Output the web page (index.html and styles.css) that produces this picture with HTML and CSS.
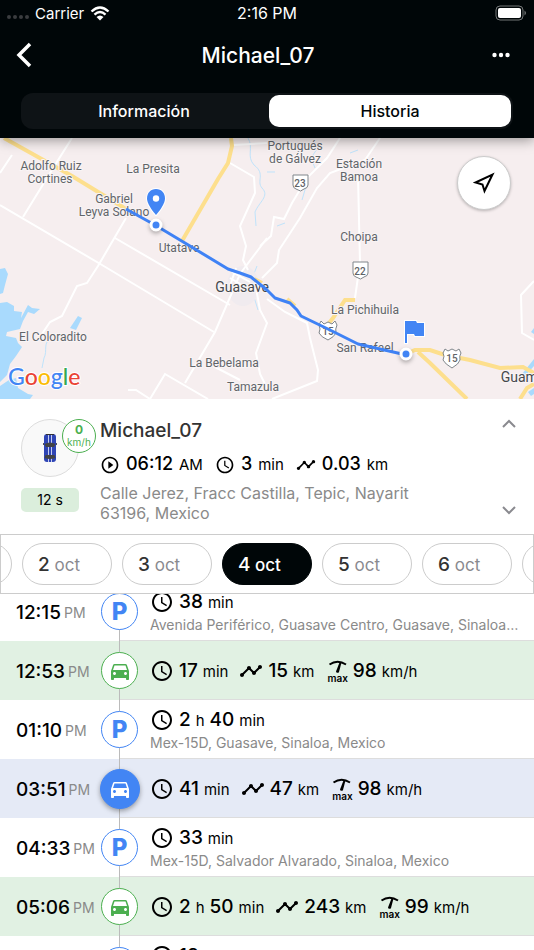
FILE: index.html
```html
<!DOCTYPE html>
<html lang="es">
<head>
    <meta charset="UTF-8">
    <meta name="viewport" content="width=device-width, initial-scale=1.0">
    <title>Michael_07 - Historia</title>
    <link rel="stylesheet" href="styles.css">
</head>
<body>
    <!-- shared icons -->
    <svg class="sprite" aria-hidden="true">
        <symbol id="i-clock" viewBox="0 0 24 24">
            <path d="M11.99 2C6.47 2 2 6.48 2 12s4.47 10 9.99 10C17.52 22 22 17.52 22 12S17.52 2 11.99 2zM12 20c-4.42 0-8-3.58-8-8s3.58-8 8-8 8 3.58 8 8-3.58 8-8 8zm.5-13H11v6l5.25 3.15.75-1.23-4.5-2.67z"/>
        </symbol>
        <symbol id="i-play" viewBox="0 0 24 24">
            <path d="M10 16.500l6-4.500-6-4.500v9zM12 2C6.480 2 2 6.480 2 12s4.480 10 10 10 10-4.480 10-10S17.520 2 12 2zm0 18c-4.410 0-8-3.590-8-8s3.590-8 8-8 8 3.590 8 8-3.590 8-8 8z"/>
        </symbol>
        <symbol id="i-route" viewBox="0 0 24 24">
            <path d="M23 8c0 1.100-.9 2-2 2-.18 0-.35-.02-.51-.07l-3.560 3.550c.05.16.07.34.07.52 0 1.100-.9 2-2 2s-2-.9-2-2c0-.18.02-.36.07-.52l-2.550-2.550c-.16.05-.34.07-.52.07s-.36-.02-.52-.07l-4.550 4.560c.05.16.07.33.07.51 0 1.100-.9 2-2 2s-2-.9-2-2 .9-2 2-2c.18 0 .35.02.51.07l4.560-4.550C8.020 9.360 8 9.180 8 9c0-1.100.9-2 2-2s2 .9 2 2c0 .18-.02.36-.07.52l2.550 2.550c.16-.05.34-.07.52-.07s.36.02.52.07l3.550-3.560C19.020 8.350 19 8.180 19 8c0-1.100.9-2 2-2s2 .9 2 2z"/>
        </symbol>
        <symbol id="i-car" viewBox="0 0 24 24">
            <path d="M18.920 6.010C18.720 5.420 18.160 5 17.500 5h-11c-.66 0-1.210.42-1.420 1.010L3 12v8c0 .55.45 1 1 1h1c.55 0 1-.45 1-1v-1h12v1c0 .55.45 1 1 1h1c.55 0 1-.45 1-1v-8l-2.080-5.990zM6.500 16c-.83 0-1.500-.67-1.500-1.500S5.670 13 6.500 13s1.500.67 1.500 1.500S7.330 16 6.500 16zm11 0c-.83 0-1.500-.67-1.500-1.500s.67-1.500 1.500-1.500 1.500.67 1.500 1.500-.67 1.500-1.500 1.500zM5 11l1.500-4.500h11L19 11H5z"/>
        </symbol>
        <symbol id="i-gauge" viewBox="0 0 20 14">
            <path d="M1.500 4.500Q9.500 -1 18 4.500" fill="none" stroke="currentColor" stroke-width="2"/>
            <path d="M11.500 2.500L13.500 2.500L11 12A1.600 1.600 0 0 1 8 11.500Z"/>
        </symbol>
    </svg>

    <header class="header">
        <div class="status">
            <div class="status-left">
                <span class="signal"><i></i><i></i><i></i><i></i></span>
                <span>Carrier</span>
                <svg class="wifi" viewBox="0 0 20 15">
                    <path d="M1.500 5.500Q10 -2.500 18.500 5.500M4.500 8.700Q10 3.500 15.500 8.700" fill="none" stroke="#fff" stroke-width="2.400"/>
                    <path d="M6.500 11Q10 8 13.500 11L10 14.500Z" fill="#fff"/>
                </svg>
            </div>
            <span class="clock">2:16 PM</span>
            <div class="status-right">
                <svg class="battery" viewBox="0 0 32 16">
                    <rect x="1" y="1" width="27" height="14" rx="4" fill="none" stroke="#737677"/>
                    <rect x="3" y="3" width="23" height="10" rx="2" fill="#fff"/>
                    <path d="M29.500 5.500Q32.500 8 29.500 10.500Z" fill="#737677"/>
                </svg>
            </div>
        </div>
        <div class="navbar">
            <button class="nav-btn" aria-label="Volver">
                <svg width="18" height="28" viewBox="0 0 18 28"><path d="M14 3L3 14L14 25" fill="none" stroke="#fff" stroke-width="3.500"/></svg>
            </button>
            <h1>Michael_07</h1>
            <button class="nav-btn nav-more" aria-label="Más">
                <svg width="18" height="6" viewBox="0 0 18 6" fill="#fff"><circle cx="2.500" cy="3" r="2.200"/><circle cx="9" cy="3" r="2.200"/><circle cx="15.500" cy="3" r="2.200"/></svg>
            </button>
        </div>
        <div class="tabs">
            <button class="tab">Información</button>
            <button class="tab active">Historia</button>
        </div>
    </header>

    <section class="map">
        <svg class="map-canvas" viewBox="0 0 534 261" preserveAspectRatio="xMidYMid slice">
            <!-- water -->
            <g fill="#a9dafd">
                <path d="M0 131L5 130L8 136L5 147L3 155L0 156Z"/>
                <path d="M0 165L7 164L14 168L14 173L22 174L21 180L28 167L32 170L40 171L34 176L28 174L23 183L20 191L7 194L6 198L16 200L18 205L22 209L16 218L10 226L7 237L0 244Z"/>
                <path d="M0 248L9 242L16 240L18 250L28 256L33 257L30 261L0 261Z"/>
                <path d="M70 190L78 178L82 180L76 192Z"/>
                <path d="M534 221L526 231L522 236L526 237L534 228ZM534 250L528 254L531 258L534 256ZM534 190L531 194L534 196Z"/>
            </g>
            <g class="river">
                <path d="M248 0C254 10 246 18 254 27C266 36 256 43 262 50C270 58 259 64 255 74L256 88"/>
                <path d="M319 8L311 20L315 30M307 45L302 62M285 85L277 88M257 128L250 146L258 172M52 200C42 204 48 213 44 220L42 230M267 34L275 34M358 12L350 15"/>
            </g>
            <ellipse cx="243" cy="148" rx="16" ry="20" fill="#f0ebef"/>
            <!-- minor roads -->
            <g class="road">
                <path d="M0 67L102 127L214 194M115 100L230 167M126 80L98 128L87 145L77 148L62 178L50 184L38 202"/>
                <path d="M72 0L55 27L23 79M12 17L0 35M267 100L240 136L215 194L185 245M128 252L136 252L150 261L165 236L208 261"/>
                <path d="M230 25L254 39L255 55L240 88L246 108L243 122L248 132M256 150L260 172L267 185L256 215L260 236L267 250M233 7L267 5M213 228L240 242"/>
                <path d="M340 0L327 20L307 40L292 65L284 81L274 79L271 98L260 108M380 0L365 22L330 35L317 50L300 80L279 112L277 125L262 140"/>
                <path d="M358 38L360 125L355 160M267 161L285 174L307 185L310 200L318 232L317 243L272 261M534 143L521 157L522 195L534 202"/>
                <path d="M232 134L250 144M230 140L247 150M236 130L230 148"/>
            </g>
            <!-- highways -->
            <g class="highway">
                <path d="M4 0L72 38L126 71M231 0L232 8L228 25L218 41L182 103M355 162L345 162L333 180L325 190M254 141L262 145M287 161L295 168"/>
                <path d="M406 216L415 212L430 212L445 217L470 222L500 230L523 229L534 235M418 214L430 225L467 261M534 246L527 250L520 261"/>
            </g>
            <!-- road shields -->
            <g class="shield">
                <path d="M293 37H308V47Q308 50 304 51L300.500 53L296 51Q293 50 293 47Z"/>
                <path d="M353 124H368V135Q368 138 364 139L360.500 141L356 139Q353 138 353 135Z"/>
                <path d="M321 183L324 186L328 184L332 186L335 183L337 187Q335 191 336 195Q334 199 328 202Q321 199 319 195Q321 191 319 187Z"/>
                <path d="M445 211L448 213L452 211L456 213L459 211L461 215Q459 218 460 222Q459 226 452 230Q445 226 443 222Q445 218 443 215Z"/>
            </g>
            <g class="shield-text">
                <text x="300" y="49">23</text>
                <text x="360" y="137">22</text>
                <text x="328" y="197">15</text>
                <text x="452" y="224">15</text>
            </g>
            <g class="place">
                <text x="51" y="32">Adolfo Ruiz</text>
                <text x="50" y="45">Cortines</text>
                <text x="153" y="35">La Presita</text>
                <text x="114" y="65">Gabriel</text>
                <text x="114" y="78">Leyva Solano</text>
                <text x="179" y="114">Utatave</text>
                <text x="295" y="12">Portugués</text>
                <text x="295" y="25">de Gálvez</text>
                <text x="359" y="30">Estación</text>
                <text x="359" y="43">Bamoa</text>
                <text x="359" y="103">Choipa</text>
                <text x="365" y="176">La Pichihuila</text>
                <text x="365" y="214">San Rafael</text>
                <text x="53" y="203">El Coloradito</text>
                <text x="224" y="229">La Bebelama</text>
                <text x="253" y="253">Tamazula</text>
                <text class="city" x="242" y="154">Guasave</text>
                <text class="city" x="534" y="244">Guamúchil</text>
            </g>
            <!-- trip -->
            <path class="trip" d="M126 71L155 87L185 105L228 131L240 135L251 139L267 152L275 160L290 165L297 172L301 178L330 192L358 206L380 211L402 216"/>
            <g class="stop">
                <circle cx="156" cy="87" r="5"/>
                <circle cx="406" cy="216" r="5"/>
            </g>
            <path class="pin" d="M156 51C150.500 51 147 55 147 60.500C147 67 156 77 156 77S165 67 165 60.500C165 55 161.500 51 156 51Z"/>
            <circle cx="156" cy="60.500" r="3.200" fill="#fff"/>
            <path class="pin" d="M405 183H416L417 185H424V198H415L414 196H407V205H405Z"/>
            <text class="google" x="8" y="247"><tspan fill="#4285f4">G</tspan><tspan fill="#ea4335">o</tspan><tspan fill="#fbbc05">o</tspan><tspan fill="#4285f4">g</tspan><tspan fill="#34a853">l</tspan><tspan fill="#ea4335">e</tspan></text>
        </svg>
        <button class="locate" aria-label="Centrar">
            <svg width="22" height="22" viewBox="0 0 22 22"><path d="M19.500 2.500L11.500 19L9.500 12.500L2.500 10.500Z" fill="none" stroke="#000" stroke-width="2"/></svg>
        </button>
    </section>

    <section class="summary">
        <div class="avatar-col">
            <div class="avatar">
                <svg width="16" height="30" viewBox="0 0 16 30">
                    <rect x="1" y="10" width="14" height="2" fill="#555"/>
                    <rect x="2" y="1" width="12" height="28" rx="3" fill="#2f45b5"/>
                    <path d="M4 1.500H12" stroke="#333"/>
                    <path d="M6.500 2V29M9.500 2V29" stroke="#c5cdf0"/>
                    <path d="M2.500 11Q8 8 13.500 11L12 14H4ZM3.500 22H12.500L13.500 25Q8 27 2.500 25Z" fill="#444"/>
                </svg>
                <div class="speed"><b>0</b><span>km/h</span></div>
            </div>
            <div class="ago">12 s</div>
        </div>
        <div class="summary-body">
            <h2>Michael_07</h2>
            <div class="stats small">
                <svg class="icon"><use href="#i-play"/></svg><b>06:12</b><span>AM</span>
                <svg class="icon"><use href="#i-clock"/></svg><b>3</b><span>min</span>
                <svg class="icon"><use href="#i-route"/></svg><b>0.03</b><span>km</span>
            </div>
            <p>Calle Jerez, Fracc Castilla, Tepic, Nayarit 63196, Mexico</p>
        </div>
        <div class="arrows">
            <button aria-label="Anterior"><svg width="14" height="9" viewBox="0 0 14 9"><path d="M1 8L7 2L13 8"/></svg></button>
            <button aria-label="Siguiente"><svg width="14" height="9" viewBox="0 0 14 9"><path d="M1 1L7 7L13 1"/></svg></button>
        </div>
    </section>

    <nav class="dates">
        <button class="date"></button>
        <button class="date"><b>2</b> oct</button>
        <button class="date"><b>3</b> oct</button>
        <button class="date active"><b>4</b> oct</button>
        <button class="date"><b>5</b> oct</button>
        <button class="date"><b>6</b> oct</button>
        <button class="date"></button>
    </nav>

    <main class="timeline">
        <div class="row">
            <div class="time"><b>12:15</b><span>PM</span></div>
            <div class="node"><span class="dot park">P</span></div>
            <div class="detail">
                <div class="stats"><svg class="icon"><use href="#i-clock"/></svg><b>38</b><span>min</span></div>
                <p>Avenida Periférico, Guasave Centro, Guasave, Sinaloa, Mexico</p>
            </div>
        </div>
        <div class="row drive">
            <div class="time"><b>12:53</b><span>PM</span></div>
            <div class="node"><span class="dot car"><svg><use href="#i-car"/></svg></span></div>
            <div class="detail">
                <div class="stats">
                    <svg class="icon"><use href="#i-clock"/></svg><b>17</b><span>min</span>
                    <svg class="icon"><use href="#i-route"/></svg><b>15</b><span>km</span>
                    <span class="max"><svg><use href="#i-gauge"/></svg>max</span><b>98</b><span>km/h</span>
                </div>
            </div>
        </div>
        <div class="row">
            <div class="time"><b>01:10</b><span>PM</span></div>
            <div class="node"><span class="dot park">P</span></div>
            <div class="detail">
                <div class="stats"><svg class="icon"><use href="#i-clock"/></svg><b>2</b><span>h</span><b>40</b><span>min</span></div>
                <p>Mex-15D, Guasave, Sinaloa, Mexico</p>
            </div>
        </div>
        <div class="row selected">
            <div class="time"><b>03:51</b><span>PM</span></div>
            <div class="node"><span class="dot car"><svg><use href="#i-car"/></svg></span></div>
            <div class="detail">
                <div class="stats">
                    <svg class="icon"><use href="#i-clock"/></svg><b>41</b><span>min</span>
                    <svg class="icon"><use href="#i-route"/></svg><b>47</b><span>km</span>
                    <span class="max"><svg><use href="#i-gauge"/></svg>max</span><b>98</b><span>km/h</span>
                </div>
            </div>
        </div>
        <div class="row">
            <div class="time"><b>04:33</b><span>PM</span></div>
            <div class="node"><span class="dot park">P</span></div>
            <div class="detail">
                <div class="stats"><svg class="icon"><use href="#i-clock"/></svg><b>33</b><span>min</span></div>
                <p>Mex-15D, Salvador Alvarado, Sinaloa, Mexico</p>
            </div>
        </div>
        <div class="row drive">
            <div class="time"><b>05:06</b><span>PM</span></div>
            <div class="node"><span class="dot car"><svg><use href="#i-car"/></svg></span></div>
            <div class="detail">
                <div class="stats">
                    <svg class="icon"><use href="#i-clock"/></svg><b>2</b><span>h</span><b>50</b><span>min</span>
                    <svg class="icon"><use href="#i-route"/></svg><b>243</b><span>km</span>
                    <span class="max"><svg><use href="#i-gauge"/></svg>max</span><b>99</b><span>km/h</span>
                </div>
            </div>
        </div>
        <div class="row">
            <div class="time"></div>
            <div class="node"><span class="dot park"></span></div>
            <div class="detail">
                <div class="stats"><svg class="icon"><use href="#i-clock"/></svg><b>18</b><span>min</span></div>
                <p></p>
            </div>
        </div>
    </main>
</body>
</html>
```
FILE: styles.css
```css
*{
    box-sizing: border-box;
}
body{
    margin: 0;
    height: 100vh;
    display: flex;
    flex-direction: column;
    overflow: hidden;
    font-family: Inter, "Liberation Sans", sans-serif;
    background-color: white;
    color: #000;
}
h1, h2, p{
    margin: 0;
}
b{
    font-weight: 500;
}
button{
    font-family: inherit;
    border: none;
    padding: 0;
    background: none;
    cursor: pointer;
}
svg{
    display: block;
}
.sprite{
    position: absolute;
    width: 0;
    height: 0;
}

/* header */
.header{
    position: relative;
    z-index: 1;
    flex: none;
    padding-bottom: 9px;
    background-color: #000608;
    color: white;
    box-shadow: 0 2px 12px rgba(0,0,0,0.4);
}
.status{
    display: grid;
    grid-template-columns: 1fr auto 1fr;
    align-items: center;
    height: 26px;
    padding: 0 7px;
    font-size: 15px;
}
.clock{
    font-size: 16px;
}
.status-left{
    display: flex;
    align-items: center;
    gap: 6px;
}
.status-right{
    display: flex;
    justify-content: flex-end;
}
.signal{
    display: flex;
    gap: 2px;
    padding-top: 8px;
}
.signal i{
    width: 4px;
    height: 4px;
    border-radius: 50%;
    background-color: #3a3d3f;
}
.wifi{
    width: 20px;
    height: 15px;
}
.battery{
    width: 32px;
    height: 16px;
}
.navbar{
    display: flex;
    justify-content: space-between;
    align-items: center;
    height: 58px;
    padding: 0 24px 0 16px;
}
.navbar h1{
    font-size: 21px;
    font-weight: 500;
}
.nav-btn{
    display: flex;
    width: 28px;
}
.nav-more{
    justify-content: flex-end;
    width: 38px;
}
.tabs{
    display: grid;
    grid-template-columns: 1fr 1fr;
    gap: 4px;
    margin: 9px 21px 0;
    padding: 2px;
    border-radius: 12px;
    background-color: #0e1316;
}
.tab{
    height: 32px;
    border-radius: 10px;
    font-size: 16px;
    font-weight: 500;
    color: white;
}
.tab.active{
    background-color: white;
    color: #000608;
}

/* map */
.map{
    position: relative;
    flex: none;
    height: 261px;
    background-color: #f6eeef;
}
.map-canvas{
    width: 100%;
    height: 100%;
}
.road path{
    fill: none;
    stroke: white;
    stroke-width: 2;
}
.river path{
    fill: none;
    stroke: #bfe3fb;
    stroke-width: 1;
}
.highway path{
    fill: none;
    stroke: #fddf8d;
    stroke-width: 4;
}
.shield path{
    fill: white;
    stroke: #80868b;
    stroke-width: 1;
}
.shield-text{
    font: 500 10px Roboto, sans-serif;
    fill: #5f6368;
    text-anchor: middle;
}
.place{
    font: 400 12px Roboto, sans-serif;
    fill: #616569;
    stroke: #f9f4f5;
    stroke-width: 2px;
    paint-order: stroke;
    text-anchor: middle;
}
.place .city{
    font-size: 14px;
    fill: #45484c;
}
.trip{
    fill: none;
    stroke: #3f82f5;
    stroke-width: 3;
    stroke-linejoin: round;
}
.stop circle{
    fill: #4285f4;
    stroke: white;
    stroke-width: 3;
    filter: drop-shadow(0 2px 2px rgba(0,0,0,0.3));
}
.pin{
    fill: #4285f4;
    stroke: white;
    stroke-width: 2;
    paint-order: stroke;
}
.google{
    font: 500 23px Lato, sans-serif;
    stroke: white;
    stroke-width: 2px;
    paint-order: stroke;
}
.locate{
    position: absolute;
    top: 18px;
    right: 23px;
    display: flex;
    align-items: center;
    justify-content: center;
    width: 54px;
    height: 54px;
    border: 1px solid #ccc;
    border-radius: 50%;
    background-color: white;
    box-shadow: 0 1px 3px rgba(0,0,0,0.25);
}

/* vehicle summary */
.summary{
    display: flex;
    flex: none;
    height: 135px;
    padding: 20px 18px 0 21px;
}
.avatar-col{
    width: 79px;
}
.avatar{
    position: relative;
    display: flex;
    align-items: center;
    justify-content: center;
    width: 58px;
    height: 58px;
    border: 1px solid #ddd;
    border-radius: 50%;
    background-color: #f9f9f9;
}
.speed{
    position: absolute;
    top: -1px;
    left: 40px;
    display: flex;
    flex-direction: column;
    justify-content: center;
    align-items: center;
    width: 34px;
    height: 34px;
    border: 1px solid #4caf50;
    border-radius: 50%;
    background-color: white;
    color: #4caf50;
    font-size: 10px;
    line-height: 12px;
}
.speed b{
    font-size: 12px;
    font-weight: 700;
}
.ago{
    width: 58px;
    height: 24px;
    margin-top: 11px;
    border-radius: 5px;
    background-color: #dbeedc;
    font-size: 14px;
    line-height: 24px;
    text-align: center;
}
.summary-body{
    flex: 1;
}
.summary-body h2{
    font-size: 19px;
    font-weight: 500;
    line-height: 24px;
    color: #333;
}
.summary-body p{
    max-width: 330px;
    margin-top: 6px;
    color: #8a8a8a;
    font-size: 16px;
    line-height: 20px;
}
.arrows{
    display: flex;
    flex-direction: column;
    justify-content: space-between;
    height: 96px;
}
.arrows path{
    fill: none;
    stroke: #8a8a8f;
    stroke-width: 2;
}

/* icon + value + unit groups */
.stats{
    display: flex;
    align-items: baseline;
    gap: 5px;
    font-size: 15px;
    line-height: 24px;
    white-space: nowrap;
}
.stats b{
    font-size: 19px;
}
.icon{
    align-self: center;
    width: 24px;
    height: 24px;
}
span + .icon{
    margin-left: 6px;
}
.stats.small{
    gap: 6px;
    margin-top: 9px;
}
.small b{
    font-size: 18px;
}
.small .icon{
    width: 20px;
    height: 20px;
}
.max{
    display: flex;
    flex-direction: column;
    align-self: center;
    align-items: center;
    margin-left: 8px;
    font-size: 10px;
    font-weight: 600;
    line-height: 9px;
}
.max svg{
    width: 20px;
    height: 14px;
}

/* day picker */
.dates{
    display: flex;
    flex: none;
    justify-content: center;
    align-items: center;
    gap: 10px;
    height: 60px;
    border: 1px solid #ccc;
    overflow: hidden;
}
.date{
    flex: none;
    width: 90px;
    height: 42px;
    padding-left: 15px;
    border: 1px solid #ccc;
    border-radius: 21px;
    background-color: white;
    color: #8a8a8f;
    font-size: 17px;
    text-align: left;
}
.date b{
    font-size: 19px;
    color: #333;
}
.date.active, .date.active b{
    border-color: #000608;
    background-color: #000608;
    color: white;
    font-weight: 500;
}

/* trips */
.timeline{
    flex: 1;
    min-height: 0;
    overflow: hidden;
}
.row{
    display: grid;
    grid-template-columns: 101px 37px minmax(0, 1fr);
    height: 59px;
}
/* list is scrolled a little under the day picker */
.row:first-child{
    margin-top: -12px;
}
.row.drive{
    background-color: #e1f1e3;
}
.row.selected{
    background-color: #e5eaf6;
}
.time{
    display: flex;
    align-items: center;
    gap: 3px;
    padding: 2px 0 0 16px;
    font-size: 14px;
    color: #8a8a8a;
}
.time b{
    font-size: 19px;
    color: #000;
}
.node{
    position: relative;
    z-index: 1;
    display: flex;
    align-items: center;
    justify-content: center;
}
.node::before{
    content: "";
    position: absolute;
    top: 0;
    bottom: 0;
    left: 18px;
    width: 1px;
    background-color: #bbb;
}
.dot{
    position: relative;
    display: flex;
    align-items: center;
    justify-content: center;
    flex: none;
    width: 37px;
    height: 37px;
    border: 1px solid #4285f4;
    border-radius: 50%;
    background-color: white;
}
.dot svg{
    width: 24px;
    height: 24px;
    fill: currentColor;
}
.park{
    color: #4285f4;
    font-size: 24px;
    font-weight: 800;
}
.car{
    border-color: #4caf50;
    color: #4caf50;
}
.selected .dot{
    width: 40px;
    height: 40px;
    border-color: #4285f4;
    background-color: #4285f4;
    color: white;
    box-shadow: 0 2px 5px rgba(0,0,0,0.35);
}
.detail{
    display: flex;
    flex-direction: column;
    justify-content: center;
    margin-left: -18px;
    padding: 2px 14px 0 30px;
    border-bottom: 1px solid #ddd;
}
.detail p{
    overflow: hidden;
    color: #8a8a8a;
    font-size: 14px;
    line-height: 20px;
    text-overflow: ellipsis;
    white-space: nowrap;
}
/* address still loading: keep its line */
.detail p:empty{
    height: 20px;
}
```
